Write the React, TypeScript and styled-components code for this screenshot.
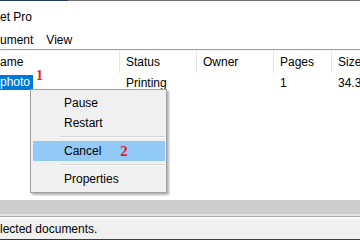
import React from 'react';
import styled, { createGlobalStyle } from 'styled-components';

const uiFont = `"Liberation Sans", Arial, sans-serif`;

const GlobalStyle = createGlobalStyle`
  html, body {
    margin: 0;
    padding: 0;
    background: #ffffff;
  }
  body {
    font-family: ${uiFont};
    font-size: 12px;
    color: #000000;
  }
`;

const Window = styled.div`
  position: relative;
  width: 360px;
  height: 240px;
  overflow: hidden;
  display: flex;
  flex-direction: column;
  background: #ffffff;
`;

const Edge = styled.div`
  height: 1px;
  flex-shrink: 0;
  display: flex;
`;

const EdgePart = styled.div<{ $w?: number; $color: string }>`
  height: 100%;
  width: ${({ $w }) => ($w ? `${$w}px` : 'auto')};
  flex: ${({ $w }) => ($w ? 'none' : '1')};
  background: ${({ $color }) => $color};
`;

const TitleBar = styled.div`
  height: 29px;
  flex-shrink: 0;
  display: flex;
  align-items: center;
  padding-top: 2px;
  box-sizing: border-box;
`;

const MenuBar = styled.div`
  height: 19px;
  flex-shrink: 0;
  display: flex;
  align-items: center;
  gap: 13px;
  border-bottom: 1px solid #a0a0a0;
`;

const ListArea = styled.div`
  flex: 1;
  display: flex;
  flex-direction: column;
  background: #ffffff;
`;

const HeaderRow = styled.div`
  height: 22px;
  display: flex;
  align-items: center;
  border-top: 1px solid #f4f4f4;
`;

const Column = styled.div<{ $w: number; $first?: boolean }>`
  width: ${({ $w }) => $w}px;
  flex-shrink: 0;
  height: 100%;
  display: flex;
  align-items: center;
  box-sizing: border-box;
  padding-left: ${({ $first }) => ($first ? 0 : 6)}px;
  border-left: ${({ $first }) => ($first ? 'none' : '1px solid #e5e5e5')};
  white-space: nowrap;
  overflow: hidden;
`;

const DataRow = styled.div`
  height: 17px;
  margin-top: 1px;
  display: flex;
  align-items: center;
`;

const Cell = styled.div<{ $w: number; $first?: boolean }>`
  width: ${({ $w }) => $w}px;
  flex-shrink: 0;
  box-sizing: border-box;
  padding-left: ${({ $first }) => ($first ? 0 : 7)}px;
  white-space: nowrap;
  position: relative;
  display: flex;
  align-items: center;
  height: 100%;
`;

const Selected = styled.span`
  background: #0078d7;
  color: #ffffff;
  height: 15px;
  line-height: 15px;
  padding-right: 3px;
`;

const Marker = styled.span`
  font-family: "Liberation Serif", "Times New Roman", serif;
  font-weight: bold;
  font-size: 14px;
  line-height: 14px;
  color: #ed1c24;
`;

const RowMarker = styled(Marker)`
  position: absolute;
  left: 36px;
  top: -5px;
`;

const BottomBand = styled.div`
  height: 19px;
  flex-shrink: 0;
  display: flex;
  flex-direction: column;
`;

const Band = styled.div<{ $h: number; $color: string }>`
  height: ${({ $h }) => $h}px;
  background: ${({ $color }) => $color};
`;

const StatusBar = styled.div`
  height: 20px;
  flex-shrink: 0;
  background: #f0f0f0;
  display: flex;
  align-items: center;
`;

const ContextMenu = styled.div`
  position: absolute;
  left: 30px;
  top: 89px;
  width: 137px;
  box-sizing: border-box;
  background: #f0f0f0;
  border: 1px solid #a0a0a0;
  box-shadow: 2px 2px 2px rgba(0, 0, 0, 0.3);
  padding: 3px 1px 3px 2px;
`;

const MenuItem = styled.div<{ $active?: boolean }>`
  height: 20px;
  display: flex;
  align-items: center;
  padding-left: 31px;
  background: ${({ $active }) => ($active ? '#91c9f7' : 'transparent')};
`;

const Separator = styled.div`
  height: 8px;
  display: flex;
  align-items: center;
  padding-left: 27px;

  &::after {
    content: '';
    flex: 1;
    height: 1px;
    background: #d4d4d4;
    border-bottom: 1px solid #fbfbfb;
  }
`;

const ItemMarker = styled(Marker)`
  margin-left: 19px;
  font-size: 15px;
`;

const columns = [
  { title: 'ame', w: 119 },
  { title: 'Status', w: 77 },
  { title: 'Owner', w: 77 },
  { title: 'Pages', w: 58 },
  { title: 'Size', w: 60 },
];

export default function App() {
  return (
    <>
      <GlobalStyle />
      <Window>
        <Edge>
          <EdgePart $w={68} $color="#1f3a5c" />
          <EdgePart $color="#6f6f6f" />
        </Edge>
        <TitleBar>et Pro</TitleBar>
        <MenuBar>
          <span>ument</span>
          <span>View</span>
        </MenuBar>
        <ListArea>
          <HeaderRow>
            {columns.map((c, i) => (
              <Column key={c.title} $w={c.w} $first={i === 0}>
                {c.title}
              </Column>
            ))}
          </HeaderRow>
          <DataRow>
            <Cell $w={119} $first>
              <Selected>photo</Selected>
              <RowMarker>1</RowMarker>
            </Cell>
            <Cell $w={77}>Printing</Cell>
            <Cell $w={77} />
            <Cell $w={58}>1</Cell>
            <Cell $w={60}>34.3</Cell>
          </DataRow>
        </ListArea>
        <BottomBand>
          <Band $h={14} $color="#cdcdcd" />
          <Band $h={2} $color="#e4e4e4" />
          <Band $h={1} $color="#a9adb5" />
          <Band $h={2} $color="#fafafa" />
        </BottomBand>
        <StatusBar>lected documents.</StatusBar>
        <Edge>
          <EdgePart $w={68} $color="#1f3a5c" />
          <EdgePart $color="#3f3f3f" />
        </Edge>
        <ContextMenu>
          <MenuItem>Pause</MenuItem>
          <MenuItem>Restart</MenuItem>
          <Separator />
          <MenuItem $active>
            Cancel
            <ItemMarker>2</ItemMarker>
          </MenuItem>
          <Separator />
          <MenuItem>Properties</MenuItem>
        </ContextMenu>
      </Window>
    </>
  );
}
